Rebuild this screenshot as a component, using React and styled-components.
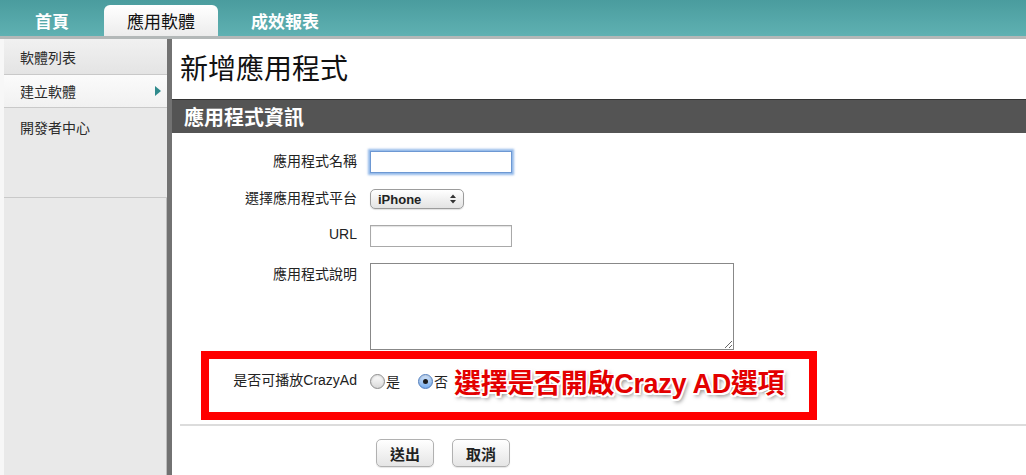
import React from "react";
import styled, { createGlobalStyle, css } from "styled-components";

const sans = `"Liberation Sans", "Noto Sans CJK TC", sans-serif`;

const GlobalStyle = createGlobalStyle`
  html, body {
    margin: 0;
    padding: 0;
    background: #fff;
    font-family: ${sans};
    overflow: hidden;
  }
`;

const Page = styled.div`
  height: 100vh;
  display: flex;
  flex-direction: column;
`;

const NavBar = styled.nav`
  height: 36px;
  display: flex;
  align-items: flex-end;
  gap: 12px;
  padding-left: 12px;
  background: linear-gradient(#4a9c9e, #5fb1b2);
  border-bottom: 3px solid #b3b8b8;
  flex-shrink: 0;
`;

const Tab = styled.div`
  height: 31px;
  width: ${(p) => p.$width}px;
  display: flex;
  align-items: center;
  justify-content: center;
  font-size: 17px;
  font-weight: 700;
  color: #fff;
  border-radius: 6px 6px 0 0;
  ${(p) =>
    p.$active &&
    css`
      background: linear-gradient(#ffffff, #ececec);
      color: #111;
      font-weight: 400;
    `}
`;

const Body = styled.div`
  flex: 1;
  display: flex;
  min-height: 0;
`;

const Sidebar = styled.aside`
  width: 163px;
  flex-shrink: 0;
  background: #e9e9e9;
  border-left: 4px solid #f7f7f7;
  border-right: 5px solid #727272;
  box-shadow: inset -1px 0 0 #bdbdbd;
`;

const SideItem = styled.div`
  height: ${(p) => p.$height}px;
  box-sizing: border-box;
  padding: ${(p) => (p.$top ? "9px" : "0")} 0 0 16px;
  display: flex;
  align-items: ${(p) => (p.$top ? "flex-start" : "center")};
  justify-content: space-between;
  font-size: 14px;
  color: #2b2b2b;
  border-bottom: 1px solid #c9c9c9;
  background: ${(p) =>
    p.$current
      ? "linear-gradient(#fbfbfb, #f1f1f1)"
      : p.$shade
      ? "linear-gradient(#f1f1f1, #e4e4e4)"
      : "#e9e9e9"};
`;

const Arrow = styled.span`
  width: 0;
  height: 0;
  margin-right: 6px;
  border-top: 5px solid transparent;
  border-bottom: 5px solid transparent;
  border-left: 6px solid #2f8a8c;
`;

const Content = styled.main`
  flex: 1;
  min-width: 0;
`;

const Title = styled.h1`
  margin: 15px 0 13px 8px;
  font-size: 28px;
  line-height: 32px;
  font-weight: 400;
  color: #111;
`;

const SectionBar = styled.div`
  height: 33px;
  display: flex;
  align-items: center;
  padding-left: 12px;
  background: #545454;
  border-top: 1px solid #333;
  font-size: 20px;
  font-weight: 700;
  color: #fff;
`;

const Form = styled.form`
  display: flex;
  flex-direction: column;
`;

const Row = styled.div`
  display: flex;
  align-items: ${(p) => (p.$top ? "flex-start" : "center")};
  margin-top: ${(p) => p.$gap}px;
  height: ${(p) => p.$height}px;
  position: relative;
`;

const Label = styled.label`
  width: 198px;
  padding-right: 13px;
  box-sizing: border-box;
  text-align: right;
  font-size: 14px;
  color: #222;
  padding-top: ${(p) => (p.$top ? "0" : "0")};
  margin-bottom: ${(p) => (p.$top ? "0" : "4px")};
  flex-shrink: 0;
`;

const TextInput = styled.input`
  width: 142px;
  height: 22px;
  box-sizing: border-box;
  margin: 0;
  border: 1px solid ${(p) => (p.$focus ? "#6d98d3" : "#a9a9a9")};
  box-shadow: ${(p) =>
    p.$focus ? "0 0 2px 2px rgba(110, 160, 225, 0.75)" : "inset 0 1px 1px rgba(0,0,0,0.12)"};
  outline: none;
  font-family: ${sans};
`;

const SelectWrap = styled.div`
  position: relative;
  display: inline-flex;
`;

const Select = styled.select`
  appearance: none;
  width: 94px;
  height: 20px;
  margin: 0;
  padding: 0 0 0 7px;
  border: 1px solid #9c9c9c;
  border-radius: 5px;
  background: linear-gradient(#ffffff, #e3e3e3);
  font-family: ${sans};
  font-size: 13px;
  font-weight: 700;
  color: #222;
  box-shadow: 0 1px 1px rgba(0, 0, 0, 0.12);
`;

const SelectArrows = styled.svg`
  position: absolute;
  right: 8px;
  top: 5px;
  pointer-events: none;
`;

const TextArea = styled.textarea`
  width: 364px;
  height: 87px;
  box-sizing: border-box;
  margin: 0;
  border: 1px solid #888;
  resize: both;
  font-family: ${sans};
`;

const Choice = styled.label`
  display: inline-flex;
  align-items: center;
  font-size: 14px;
  color: #222;
  margin-right: ${(p) => p.$space}px;
`;

const Radio = styled.input.attrs({ type: "radio" })`
  appearance: none;
  width: 15px;
  height: 15px;
  margin: 0 1px 0 0;
  border-radius: 50%;
  border: 1px solid #8c8c8c;
  background: linear-gradient(#ffffff, #d9d9d9);
  box-shadow: inset 0 1px 2px rgba(0, 0, 0, 0.15);
  display: grid;
  place-items: center;
  &:checked {
    border-color: #4f7dbd;
    background: linear-gradient(#d6e7fc, #79aeee);
  }
  &:checked::after {
    content: "";
    width: 5px;
    height: 5px;
    border-radius: 50%;
    background: #1c1c1c;
  }
`;

const Callout = styled.span`
  margin-left: 6px;
  font-size: 27px;
  font-weight: 700;
  color: #e30000;
  letter-spacing: -0.3px;
  text-shadow: 1.5px 0 0 #fff, -1.5px 0 0 #fff, 0 1.5px 0 #fff, 0 -1.5px 0 #fff,
    1.5px 1.5px 0 #fff, -1.5px -1.5px 0 #fff, 1.5px -1.5px 0 #fff,
    -1.5px 1.5px 0 #fff, 2px 3px 4px rgba(0, 0, 0, 0.55);
`;

const Highlight = styled.div`
  position: absolute;
  left: 29px;
  top: -15px;
  width: 616px;
  height: 69px;
  box-sizing: border-box;
  border: 8px solid #ff0000;
  pointer-events: none;
`;

const Divider = styled.hr`
  margin: 28px 0 0 8px;
  border: 0;
  height: 2px;
  background: #dcdcdc;
`;

const Actions = styled.div`
  display: flex;
  gap: 18px;
  margin: 13px 0 0 204px;
`;

const Button = styled.button`
  width: 58px;
  height: 28px;
  padding: 0;
  border: 1px solid #b1b1b1;
  border-radius: 5px;
  background: linear-gradient(#ffffff, #e5e5e5);
  box-shadow: 0 1px 1px rgba(0, 0, 0, 0.1);
  font-family: ${sans};
  font-size: 15px;
  font-weight: 700;
  color: #222;
`;

const tabs = [
  { label: "首頁", width: 80 },
  { label: "應用軟體", width: 114, active: true },
  { label: "成效報表", width: 110 },
];

export default function App() {
  return (
    <Page>
      <GlobalStyle />
      <NavBar>
        {tabs.map((t) => (
          <Tab key={t.label} $width={t.width} $active={t.active}>
            {t.label}
          </Tab>
        ))}
      </NavBar>
      <Body>
        <Sidebar>
          <SideItem $height={36} $shade>
            軟體列表
          </SideItem>
          <SideItem $height={33} $current>
            建立軟體
            <Arrow />
          </SideItem>
          <SideItem $height={90} $top>
            開發者中心
          </SideItem>
        </Sidebar>
        <Content>
          <Title>新增應用程式</Title>
          <SectionBar>應用程式資訊</SectionBar>
          <Form onSubmit={(e) => e.preventDefault()}>
            <Row $gap={18} $height={22}>
              <Label>應用程式名稱</Label>
              <TextInput $focus />
            </Row>
            <Row $gap={16} $height={20}>
              <Label>選擇應用程式平台</Label>
              <SelectWrap>
                <Select defaultValue="iphone">
                  <option value="iphone">iPhone</option>
                  <option value="android">Android</option>
                </Select>
                <SelectArrows width="6" height="10" viewBox="0 0 6 10">
                  <path d="M0 4 L3 0.5 L6 4 Z M0 6 L3 9.5 L6 6 Z" fill="#333" />
                </SelectArrows>
              </SelectWrap>
            </Row>
            <Row $gap={16} $height={22}>
              <Label>URL</Label>
              <TextInput />
            </Row>
            <Row $gap={16} $height={87} $top>
              <Label $top>應用程式說明</Label>
              <TextArea />
            </Row>
            <Row $gap={16} $height={30}>
              <Label>是否可播放CrazyAd</Label>
              <Choice $space={18}>
                <Radio name="crazyad" />是
              </Choice>
              <Choice $space={0}>
                <Radio name="crazyad" defaultChecked />否
              </Choice>
              <Callout>選擇是否開啟Crazy AD選項</Callout>
              <Highlight />
            </Row>
            <Divider />
            <Actions>
              <Button type="submit">送出</Button>
              <Button type="button">取消</Button>
            </Actions>
          </Form>
        </Content>
      </Body>
    </Page>
  );
}
